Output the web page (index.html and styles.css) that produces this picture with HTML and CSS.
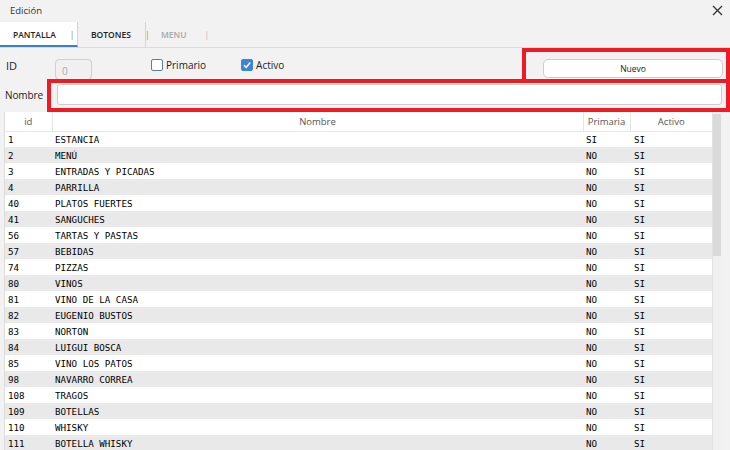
FILE: index.html
```html
<!DOCTYPE html>
<html lang="es">
<head>
    <meta charset="UTF-8">
    <title>Edición</title>
    <link rel="stylesheet" href="styles.css">
</head>
<body>
    <div class="titlebar">
        <span class="title">Edición</span>
        <svg class="close" width="11" height="11" viewBox="0 0 11 11"><path d="M1 1L10 10M10 1L1 10" stroke="#333" stroke-width="1.3"/></svg>
    </div>
    <div class="tabs">
        <div class="tab active">PANTALLA<span class="pipe">|</span></div>
        <div class="tab">BOTONES<span class="pipe">|</span></div>
        <div class="tab muted">MENU<span class="pipe">|</span></div>
    </div>
    <div class="row1">
        <span class="lbl-id">ID</span>
        <div class="id-box">0</div>
        <label class="check"><span class="box"></span>Primario</label>
        <label class="check checked"><span class="box"><svg width="10" height="10" viewBox="0 0 10 10"><path d="M2 5.2L4.2 7.4L8.2 2.6" fill="none" stroke="#fff" stroke-width="1.6"/></svg></span>Activo</label>
        <div class="mark mark-top">
            <button class="btn">Nuevo</button>
        </div>
    </div>
    <div class="row2">
        <span class="lbl-nombre">Nombre</span>
        <div class="mark mark-bottom">
            <div class="input"></div>
        </div>
    </div>
    <div class="grid-wrap">
        <table class="grid">
            <tr class="head"><th class="c-id">id</th><th class="c-nom">Nombre</th><th class="c-pri">Primaria</th><th class="c-act">Activo</th></tr>
            <tr><td>1</td><td>ESTANCIA</td><td>SI</td><td>SI</td></tr>
            <tr><td>2</td><td>MENÚ</td><td>NO</td><td>SI</td></tr>
            <tr><td>3</td><td>ENTRADAS Y PICADAS</td><td>NO</td><td>SI</td></tr>
            <tr><td>4</td><td>PARRILLA</td><td>NO</td><td>SI</td></tr>
            <tr><td>40</td><td>PLATOS FUERTES</td><td>NO</td><td>SI</td></tr>
            <tr><td>41</td><td>SANGUCHES</td><td>NO</td><td>SI</td></tr>
            <tr><td>56</td><td>TARTAS Y PASTAS</td><td>NO</td><td>SI</td></tr>
            <tr><td>57</td><td>BEBIDAS</td><td>NO</td><td>SI</td></tr>
            <tr><td>74</td><td>PIZZAS</td><td>NO</td><td>SI</td></tr>
            <tr><td>80</td><td>VINOS</td><td>NO</td><td>SI</td></tr>
            <tr><td>81</td><td>VINO DE LA CASA</td><td>NO</td><td>SI</td></tr>
            <tr><td>82</td><td>EUGENIO BUSTOS</td><td>NO</td><td>SI</td></tr>
            <tr><td>83</td><td>NORTON</td><td>NO</td><td>SI</td></tr>
            <tr><td>84</td><td>LUIGUI BOSCA</td><td>NO</td><td>SI</td></tr>
            <tr><td>85</td><td>VINO LOS PATOS</td><td>NO</td><td>SI</td></tr>
            <tr><td>98</td><td>NAVARRO CORREA</td><td>NO</td><td>SI</td></tr>
            <tr><td>108</td><td>TRAGOS</td><td>NO</td><td>SI</td></tr>
            <tr><td>109</td><td>BOTELLAS</td><td>NO</td><td>SI</td></tr>
            <tr><td>110</td><td>WHISKY</td><td>NO</td><td>SI</td></tr>
            <tr><td>111</td><td>BOTELLA WHISKY</td><td>NO</td><td>SI</td></tr>
        </table>
        <div class="scrollbar"><div class="thumb"></div></div>
    </div>
</body>
</html>
```

FILE: styles.css
```css
*, *:before, *:after {
    box-sizing: border-box;
}
body {
    margin: 0;
    width: 730px;
    height: 450px;
    overflow: hidden;
    background: #f2f2f2;
    color: #222;
    font-family: "Open Sans", sans-serif;
}
.titlebar {
    height: 22px;
    display: flex;
    align-items: center;
    justify-content: space-between;
    padding: 0 7px 2px 10px;
}
.title {
    font-size: 9.5px;
    color: #333;
}
.tabs {
    height: 26px;
    display: flex;
    border-bottom: 1px solid #dcdcdc;
}
.tab {
    width: 68px;
    display: flex;
    align-items: center;
    padding-left: 13px;
    font-size: 8.5px;
    font-weight: 600;
    color: #222;
    border-right: 1px solid #d4d4d4;
}
.tab.active {
    width: 78px;
    background: #fff;
    border-bottom: 2px solid #3b7fcf;
    padding-top: 2px;
}
.tab.muted {
    color: #a8a8a8;
    border-right: none;
    padding-left: 15px;
}
.pipe {
    margin-left: 14px;
    font-weight: 400;
    color: #888;
}
.tab.muted .pipe {
    margin-left: 18px;
    color: #bbb;
}
.row1 {
    height: 35px;
    display: flex;
    align-items: flex-start;
    font-size: 10px;
}
.lbl-id {
    margin: 10px 0 0 6px;
    width: 49px;
    font-size: 11px;
}
.id-box {
    margin-top: 11px;
    width: 37px;
    height: 21px;
    border: 1px solid #cfcfcf;
    border-radius: 4px;
    background: #f0f0f0;
    color: #aaa;
    font-size: 10px;
    padding: 4px 0 0 6px;
}
.check {
    display: flex;
    align-items: center;
    margin-top: 10px;
    height: 14px;
}
.check:first-of-type {
    margin-left: 59px;
}
.check.checked {
    margin-left: 35px;
}
.box {
    width: 12px;
    height: 12px;
    margin-right: 3px;
    border: 1.5px solid #5b7ea8;
    border-radius: 2px;
    background: #fff;
    display: flex;
    align-items: center;
    justify-content: center;
}
.checked .box {
    background: #3f83d6;
    border-color: #3f83d6;
}
.mark {
    border: 4px solid #ed1c24;
}
.mark-top {
    margin-left: auto;
    width: 208px;
    height: 35px;
    padding: 7px 3px 0 17px;
}
.btn {
    display: block;
    width: 180px;
    height: 19px;
    border: 1px solid #cdcdcd;
    border-radius: 5px;
    background: #fff;
    font-family: "Open Sans", sans-serif;
    font-size: 8.5px;
    color: #222;
    padding: 0;
}
.row2 {
    height: 33px;
    margin-top: -4px;
    display: flex;
}
.lbl-nombre {
    margin: 9px 0 0 5px;
    width: 42px;
    font-size: 10px;
    letter-spacing: -0.1px;
    white-space: nowrap;
}
.mark-bottom {
    flex: 1;
    padding: 1px 4px 0 6px;
}
.input {
    height: 21px;
    background: #fff;
    border: 1px solid #cdcdcd;
    border-radius: 3px;
}
.grid-wrap {
    margin-left: 4px;
    width: 718px;
    display: flex;
    background: #fff;
    border-left: 1px solid #dcdcdc;
}
.grid {
    width: 707px;
    border-collapse: collapse;
    table-layout: fixed;
}
.grid th {
    height: 19px;
    font-weight: 400;
    font-size: 9.5px;
    color: #555;
    border-right: 1px solid #e6e6e6;
    border-bottom: 1px solid #e6e6e6;
    padding: 0;
}
.grid th:last-child {
    border-right: none;
}
.c-id { width: 47px; }
.c-nom { width: 531px; }
.c-pri { width: 47px; }
.grid td {
    height: 16px;
    padding: 0 0 0 3px;
    font-family: "DejaVu Sans Mono", monospace;
    font-size: 9.2px;
    color: #000;
    white-space: nowrap;
}
.grid td:nth-child(4) {
    padding-left: 4px;
}
.grid tr:nth-child(odd) td {
    background: #e9e9e9;
}
.scrollbar {
    width: 10px;
    background: #f0f0f0;
    border-left: 1px solid #e2e2e2;
}
.thumb {
    width: 8px;
    height: 142px;
    margin-top: 2px;
    background: #dadada;
}
```
